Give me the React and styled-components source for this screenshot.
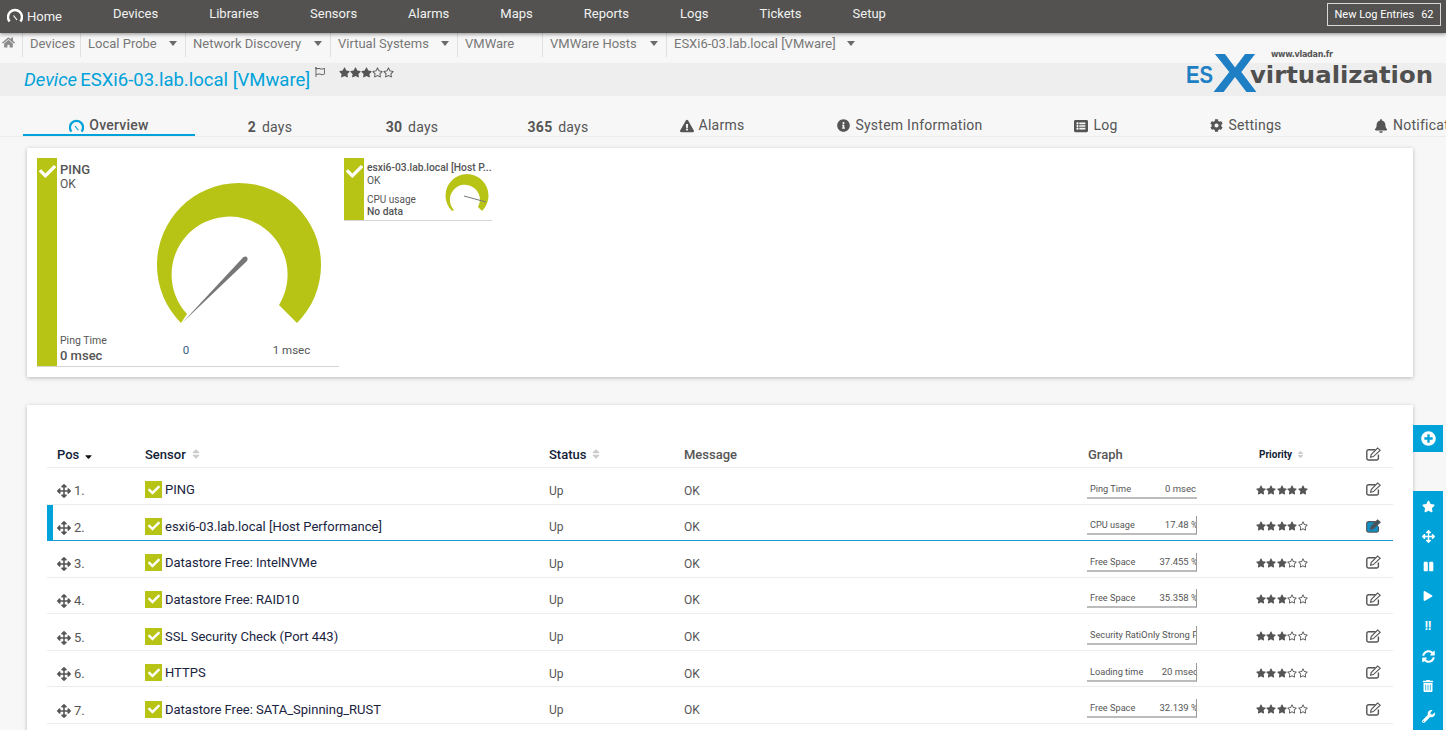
import React from 'react';
import styled, { createGlobalStyle } from 'styled-components';
import {
  FaHome, FaRegFlag, FaStar, FaRegStar, FaExclamationTriangle, FaInfoCircle, FaListAlt, FaCog, FaBell,
  FaArrowsAlt, FaCheck, FaSort, FaSortDown, FaPlusCircle, FaPause, FaPlay, FaSyncAlt, FaTrashAlt, FaWrench,
} from 'react-icons/fa';

const Global = createGlobalStyle`
  html, body { margin: 0; padding: 0; background: #f7f7f7; overflow: hidden; }
  body { font-family: Roboto, "Liberation Sans", sans-serif; }
`;

const GREEN = '#b7c416';
const BLUE = '#00a3d9';

const Page = styled.div`
  position: relative;
  width: 1446px;
  height: 730px;
  overflow: hidden;
  background: #f7f7f7;
`;

const TopNav = styled.nav`
  position: relative;
  z-index: 2;
  height: 33px;
  background: #535250;
  box-shadow: 0 1px 4px rgba(0, 0, 0, 0.45);
  display: flex;
  align-items: flex-start;
  padding-left: 7px;
  color: #f2f2f2;
  font-size: 13px;
`;

const HomeLink = styled.a`
  display: flex;
  align-items: center;
  gap: 4px;
  margin-right: 51px;
  padding-top: 8px;
`;

const NavLink = styled.a`
  margin-right: 51px;
  padding-top: 6px;
`;

const LogBox = styled.div`
  position: absolute;
  left: 1327px;
  top: 3px;
  width: 114px;
  height: 23px;
  box-sizing: border-box;
  border: 1px solid #d8d8d8;
  display: flex;
  align-items: center;
  justify-content: center;
  gap: 7px;
  font-size: 11px;
  color: #fff;
`;

const Crumbs = styled.div`
  height: 30px;
  display: flex;
  align-items: flex-start;
  color: #777;
  font-size: 13px;
`;

const HomeCrumb = styled.div`
  width: 22px;
  padding: 3px 0 0 2px;
  box-sizing: border-box;
  display: flex;
  color: #8a8a8a;
`;

const Crumb = styled.div`
  height: 24px;
  display: flex;
  align-items: center;
  padding: 0 7px 4px;
  box-sizing: border-box;
  border-left: 1px solid #e0e0e0;
  width: ${(p) => p.$w}px;
  white-space: nowrap;
`;

const Caret = styled.span`
  margin-left: auto;
  margin-right: 1px;
  width: 0;
  height: 0;
  border-left: 4.5px solid transparent;
  border-right: 4.5px solid transparent;
  border-top: 5px solid #6a6a6a;
`;

const TitleBar = styled.div`
  position: relative;
  height: 33px;
  background: #efeeef;
  display: flex;
  align-items: flex-start;
  padding-left: 24px;
`;

const Title = styled.h1`
  margin: 6px 0 0;
  font-size: 18.5px;
  font-weight: 400;
  color: ${BLUE};
  white-space: nowrap;
  em { margin-right: 3px; }
`;

const FlagWrap = styled.span`
  margin: 4px 0 0 5px;
  color: #666;
  display: flex;
`;

const StarRow = styled.span`
  display: inline-flex;
  gap: ${(p) => p.$gap ?? 1}px;
  color: #555;
  font-size: ${(p) => p.$size ?? 10}px;
`;

const TitleStars = styled.div`
  margin: 0 0 0 14px;
`;

const LogoWrap = styled.svg`
  position: absolute;
  left: 1180px;
  top: -14px;
  overflow: visible;
`;

const Tabs = styled.div`
  margin: 19px 0 0;
  padding-left: 23px;
  height: 21px;
  display: flex;
  border-bottom: 1px solid #ececec;
  color: #555;
  font-size: 14px;
`;

const Tab = styled.div`
  width: ${(p) => p.$w}px;
  flex-shrink: 0;
  height: 21px;
  box-sizing: border-box;
  display: flex;
  justify-content: ${(p) => (p.$start ? 'flex-start' : 'center')};
  align-items: flex-start;
  gap: 5px;
  white-space: nowrap;
  letter-spacing: 0.25px;
  padding-top: ${(p) => (p.$low ? 4 : 2)}px;
  padding-left: ${(p) => (p.$start ? 41 : 0)}px;
  font-weight: ${(p) => (p.$active ? 500 : 400)};
  border-bottom: ${(p) => (p.$active ? `2px solid ${BLUE}` : 'none')};
  svg { margin-top: 2px; flex-shrink: 0; }
  b { font-weight: 700; margin-right: 2px; }
`;

const Card = styled.section`
  margin: 11px 33px 0 27px;
  background: #fff;
  box-shadow: 0 1px 4px rgba(0, 0, 0, 0.25);
`;

const GaugeCard = styled(Card)`
  height: 229px;
  padding: 10px;
  box-sizing: border-box;
  display: flex;
  align-items: flex-start;
  gap: 5px;
`;

const Tile = styled.div`
  display: flex;
  width: ${(p) => p.$w}px;
  height: ${(p) => p.$h}px;
  border-bottom: 1px solid #d5d5d5;
  color: #555;
`;

const TileBar = styled.div`
  width: 20px;
  flex-shrink: 0;
  background: ${GREEN};
  display: flex;
  justify-content: center;
  padding-top: 5px;
  box-sizing: border-box;
  color: #fff;
  font-size: 17px;
`;

const BigText = styled.div`
  width: 73px;
  padding: 4px 0 2px 3px;
  display: flex;
  flex-direction: column;
  font-size: 12px;
  strong { font-size: 13px; font-weight: 500; line-height: 15px; }
  span { line-height: 14px; }
  small { margin-top: auto; font-size: 10.5px; line-height: 14px; }
  b { font-size: 13px; font-weight: 500; line-height: 16px; }
`;

const SmallText = styled.div`
  position: relative;
  flex: 1;
  padding: 4px 0 0 3px;
  font-size: 10.3px;
  display: flex;
  flex-direction: column;
  strong { font-weight: 500; line-height: 12px; white-space: nowrap; }
  span { line-height: 14px; }
  small { font-size: 10px; line-height: 12px; margin-top: 6px; }
  b { font-weight: 500; line-height: 11px; }
`;

const MiniGauge = styled.svg`
  position: absolute;
  left: 80px;
  top: 15px;
`;

const TableCard = styled(Card)`
  margin-top: 28px;
  height: 330px;
  padding: 36px 20px 0;
`;

const HeadRow = styled.div`
  display: grid;
  grid-template-columns: 88px 404px 135px 404px 168px 110px 1fr;
  height: 26px;
  padding-left: 10px;
  align-items: center;
  border-bottom: 1px solid #ececec;
  font-size: 13px;
  font-weight: 500;
  color: #131d36;
`;

const HeadCell = styled.div`
  display: flex;
  align-items: center;
  gap: 4px;
  color: ${(p) => (p.$muted ? '#555' : '#131d36')};
  font-size: ${(p) => p.$size ?? 13}px;
  font-weight: ${(p) => (p.$bold ? 700 : 500)};
  padding-left: ${(p) => p.$pad ?? 0}px;
`;

const Row = styled.div`
  display: grid;
  grid-template-columns: 88px 404px 135px 404px 168px 110px 1fr;
  height: 36.57px;
  box-sizing: border-box;
  padding: 10px 0 0 ${(p) => (p.$selected ? 4 : 10)}px;
  align-items: center;
  border-bottom: 1px solid ${(p) => (p.$selected ? '#1a9cd0' : '#ececec')};
  border-left: ${(p) => (p.$selected ? `6px solid ${BLUE}` : 'none')};
  font-size: 12px;
  color: #555;
`;

const PosCell = styled.div`
  display: flex;
  align-items: center;
  gap: 3px;
  font-size: 13px;
  svg { margin-top: 1px; }
`;

const SensorCell = styled.div`
  display: flex;
  align-items: center;
  gap: 3px;
  margin-top: -2px;
  font-size: 13px;
  color: #1a2440;
`;

const CheckBox = styled.span`
  width: 17px;
  height: 17px;
  background: ${GREEN};
  color: #fff;
  display: flex;
  align-items: center;
  justify-content: center;
  font-size: 12px;
`;

const GraphBox = styled.div`
  width: 110px;
  height: 19px;
  margin: -3px 0 0 -1px;
  box-sizing: border-box;
  padding: 0 1px 0 3px;
  display: flex;
  justify-content: space-between;
  align-items: center;
  overflow: hidden;
  white-space: nowrap;
  color: #555;
  border-bottom: 2px solid #bcbcbc;
  border-right: ${(p) => (p.$edge ? '1px solid #999' : 'none')};
`;

const GraphLabel = styled.span`
  font-size: 9.2px;
`;

const GraphValue = styled.span`
  font-size: 9.5px;
  margin-right: ${(p) => (p.$over ? -3 : 0)}px;
`;

const SideStack = styled.aside`
  position: absolute;
  left: 1413px;
  top: 425px;
  width: 30px;
  display: flex;
  flex-direction: column;
  gap: 39px;
`;

const SideBlock = styled.div`
  background: ${BLUE};
  color: #fff;
  display: flex;
  flex-direction: column;
  align-items: center;
  justify-content: flex-start;
  height: ${(p) => p.$h}px;
  box-sizing: border-box;
  padding-top: ${(p) => p.$top}px;
`;

const SideIcon = styled.span`
  height: 30px;
  flex-shrink: 0;
  font-size: ${(p) => p.$size ?? 13}px;
  font-weight: 700;
  display: flex;
  align-items: center;
  justify-content: center;
`;

const GaugeMark = ({ color, size = 16 }) => (
  <svg width={size} height={size} viewBox="0 0 16 16" fill="none">
    <path d="M2.6 13.5A7 7 0 1 1 13.4 13.5" stroke={color} strokeWidth="2.4" />
    <path d="M6.5 7.5L10 12" stroke={color} strokeWidth="1.2" />
  </svg>
);

const EditIcon = ({ active }) => (
  <svg width="15" height="14" viewBox="0 0 15 14" fill="none">
    <path d="M12.4 7.5V11.2A1.8 1.8 0 0 1 10.6 13H2.6A1.8 1.8 0 0 1 0.8 11.2V4.6A1.8 1.8 0 0 1 2.6 2.8H9.5"
      stroke="#555" strokeWidth="1.4" fill={active ? '#0f8fc4' : 'none'} />
    {active && <rect x="1.4" y="3.4" width="10.4" height="9" rx="1" fill="#0f8fc4" />}
    <path d="M4.6 10.2L5.2 7.6 11.6 1 14.2 3.2 7.4 9.6z" fill={active ? '#3f5560' : '#fff'} stroke="#555" strokeWidth="1.1" />
  </svg>
);

const Stars = ({ value, size, gap }) => (
  <StarRow $size={size} $gap={gap}>
    {[1, 2, 3, 4, 5].map((n) => (n <= value ? <FaStar key={n} /> : <FaRegStar key={n} />))}
  </StarRow>
);

const navItems = ['Devices', 'Libraries', 'Sensors', 'Alarms', 'Maps', 'Reports', 'Logs', 'Tickets', 'Setup'];

const crumbs = [
  { label: 'Devices', w: 58 },
  { label: 'Local Probe', w: 105, caret: true },
  { label: 'Network Discovery', w: 145, caret: true },
  { label: 'Virtual Systems', w: 127, caret: true },
  { label: 'VMWare', w: 85 },
  { label: 'VMWare Hosts', w: 124, caret: true },
  { label: 'ESXi6-03.lab.local [VMware]', w: 197, caret: true },
];

const rows = [
  { name: 'PING', label: 'Ping Time', value: '0 msec', stars: 5 },
  { name: 'esxi6-03.lab.local [Host Performance]', label: 'CPU usage', value: '17.48 %', stars: 4, over: true, selected: true },
  { name: 'Datastore Free: IntelNVMe', label: 'Free Space', value: '37.455 %', stars: 3, over: true },
  { name: 'Datastore Free: RAID10', label: 'Free Space', value: '35.358 %', stars: 3, over: true },
  { name: 'SSL Security Check (Port 443)', label: 'Security Rati', value: 'Only Strong P', stars: 3, edge: true },
  { name: 'HTTPS', label: 'Loading time', value: '20 msec', stars: 3, over: true },
  { name: 'Datastore Free: SATA_Spinning_RUST', label: 'Free Space', value: '32.139 %', stars: 3, over: true },
];

const App = () => (
  <Page>
    <Global />
    <TopNav>
      <HomeLink><GaugeMark color="#fff" />Home</HomeLink>
      {navItems.map((item) => <NavLink key={item}>{item}</NavLink>)}
      <LogBox><span>New Log Entries</span><span>62</span></LogBox>
    </TopNav>

    <Crumbs>
      <HomeCrumb><FaHome size={13} /></HomeCrumb>
      {crumbs.map((c) => (
        <Crumb key={c.label} $w={c.w}>{c.label}{c.caret && <Caret />}</Crumb>
      ))}
    </Crumbs>

    <TitleBar>
      <Title><em>Device</em>ESXi6-03.lab.local [VMware]</Title>
      <FlagWrap><FaRegFlag size={10} /></FlagWrap>
      <TitleStars><Stars value={3} size={11} gap={0} /></TitleStars>
      <LogoWrap width="260" height="50" viewBox="0 0 260 50">
        <text x="91" y="8" fontFamily="'DejaVu Sans', sans-serif" fontWeight="700" fontSize="8" fill="#555" textLength="62">www.vladan.fr</text>
        <text x="6" y="34" fontFamily="'Liberation Sans', sans-serif" fontWeight="700" fontSize="24" fill="#1f7fc4" textLength="27" lengthAdjust="spacingAndGlyphs">ES</text>
        <text x="33" y="43" fontFamily="'Liberation Sans', sans-serif" fontWeight="700" fontSize="55" fill="#1f7fc4" textLength="44" lengthAdjust="spacingAndGlyphs">X</text>
        <text x="70" y="34" fontFamily="'DejaVu Sans', sans-serif" fontWeight="700" fontSize="23" fill="#505050" textLength="183" lengthAdjust="spacingAndGlyphs">virtualization</text>
      </LogoWrap>
    </TitleBar>

    <Tabs>
      <Tab $w={172} $active><GaugeMark color={BLUE} size={15} />Overview</Tab>
      <Tab $w={150} $low><span><b>2</b> days</span></Tab>
      <Tab $w={134} $low><span><b>30</b> days</span></Tab>
      <Tab $w={158} $low><span><b>365</b> days</span></Tab>
      <Tab $w={150}><FaExclamationTriangle size={14} />Alarms</Tab>
      <Tab $w={246}><FaInfoCircle size={13} />System Information</Tab>
      <Tab $w={126}><FaListAlt size={14} />Log</Tab>
      <Tab $w={174}><FaCog size={13} />Settings</Tab>
      <Tab $w={120} $start><FaBell size={14} />Notifications</Tab>
    </Tabs>

    <GaugeCard>
      <Tile $w={302} $h={208}>
        <TileBar><FaCheck /></TileBar>
        <BigText>
          <strong>PING</strong>
          <span>OK</span>
          <small>Ping Time</small>
          <b>0 msec</b>
        </BigText>
        <svg width="206" height="207" viewBox="133 158 206 207">
          <path d="M181 323A82 82 0 1 1 297 323L279 305A58 58 0 1 0 187 314Z" fill={GREEN} />
          <path d="M182.5 322.5L243 257.5Q246 255.5 247.5 258Q248 260 246.5 261.5Z" fill="#777" />
          <text x="186" y="354" textAnchor="middle" fontSize="11.5" fill="#35607e">0</text>
          <text x="291.5" y="354" textAnchor="middle" fontSize="11.5" fill="#555">1 msec</text>
        </svg>
      </Tile>
      <Tile $w={148} $h={62}>
        <TileBar><FaCheck /></TileBar>
        <SmallText>
          <strong>esxi6-03.lab.local [Host P...</strong>
          <span>OK</span>
          <small>CPU usage</small>
          <b>No data</b>
          <MiniGauge width="48" height="40" viewBox="444 172 48 40">
            <path d="M452 210A21.5 21.5 0 1 1 482 210L478 206A15 15 0 1 0 454 209Z" fill={GREEN} />
            <path d="M464 195L486 201" stroke="#777" strokeWidth="1" />
          </MiniGauge>
        </SmallText>
      </Tile>
    </GaugeCard>

    <TableCard>
      <HeadRow>
        <HeadCell>Pos <FaSortDown size={11} color="#111" /></HeadCell>
        <HeadCell>Sensor <FaSort size={12} color="#ccc" /></HeadCell>
        <HeadCell>Status <FaSort size={12} color="#ccc" /></HeadCell>
        <HeadCell $muted>Message</HeadCell>
        <HeadCell $muted>Graph</HeadCell>
        <HeadCell $size={10} $bold $pad={3}>Priority <FaSort size={9} color="#ccc" /></HeadCell>
        <HeadCell><EditIcon /></HeadCell>
      </HeadRow>
      {rows.map((r, i) => (
        <Row key={r.name} $selected={r.selected}>
          <PosCell><FaArrowsAlt size={14} color="#555" />{i + 1}.</PosCell>
          <SensorCell><CheckBox><FaCheck /></CheckBox>{r.name}</SensorCell>
          <div>Up</div>
          <div>OK</div>
          <GraphBox $edge={r.over || r.edge}>
            <GraphLabel>{r.label}</GraphLabel>
            <GraphValue $over={r.over}>{r.value}</GraphValue>
          </GraphBox>
          <div><Stars value={r.stars} size={10} gap={0.4} /></div>
          <div><EditIcon active={r.selected} /></div>
        </Row>
      ))}
    </TableCard>

    <SideStack>
      <SideBlock $h={27} $top={6}><FaPlusCircle size={15} /></SideBlock>
      <SideBlock $h={239} $top={0}>
        <SideIcon><FaStar /></SideIcon>
        <SideIcon><FaArrowsAlt /></SideIcon>
        <SideIcon $size={11}><FaPause /></SideIcon>
        <SideIcon $size={10}><FaPlay /></SideIcon>
        <SideIcon $size={12}>!!</SideIcon>
        <SideIcon><FaSyncAlt /></SideIcon>
        <SideIcon $size={12}><FaTrashAlt /></SideIcon>
        <SideIcon><FaWrench /></SideIcon>
      </SideBlock>
    </SideStack>
  </Page>
);

export default App;
